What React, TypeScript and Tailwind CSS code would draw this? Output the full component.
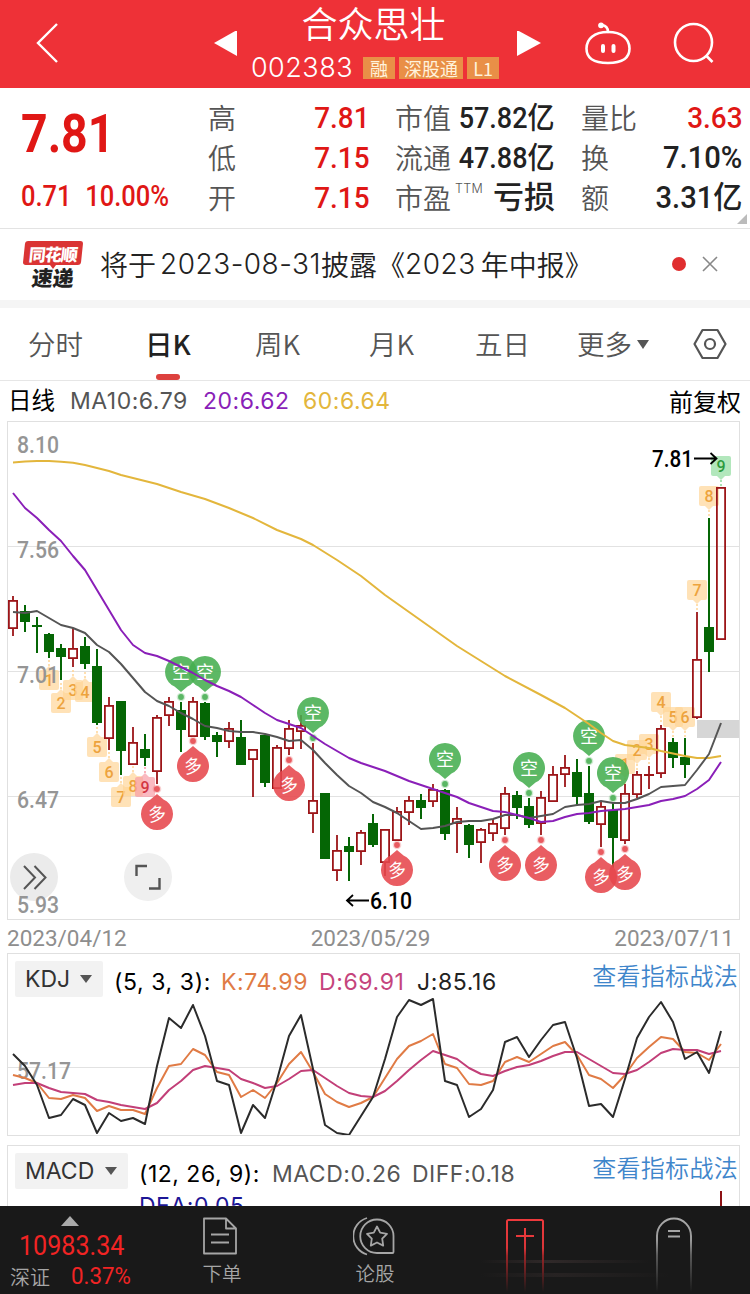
import type { ReactNode } from 'react'

type Candle = [kind: 'u' | 'd', high: number, top: number, bottom: number, low: number]

const candles: Candle[] = [
  ['u', 596, 600, 629, 636],
  ['d', 605, 611, 622, 632],
  ['d', 617, 625, 627, 653],
  ['d', 633, 634, 652, 658],
  ['d', 644, 648, 657, 680],
  ['u', 628, 648, 659, 667],
  ['d', 637, 646, 664, 669],
  ['d', 649, 666, 723, 725],
  ['u', 697, 705, 739, 750],
  ['d', 701, 701, 751, 775],
  ['u', 727, 742, 765, 765],
  ['d', 734, 749, 758, 766],
  ['u', 715, 717, 772, 784],
  ['u', 697, 701, 716, 726],
  ['d', 702, 710, 730, 752],
  ['u', 697, 701, 737, 737],
  ['d', 702, 703, 737, 740],
  ['d', 732, 735, 742, 757],
  ['u', 722, 728, 742, 748],
  ['d', 720, 737, 765, 765],
  ['u', 749, 749, 760, 797],
  ['d', 735, 735, 783, 787],
  ['u', 745, 747, 789, 789],
  ['u', 720, 728, 749, 755],
  ['u', 715, 725, 732, 749],
  ['u', 743, 800, 814, 833],
  ['d', 793, 793, 859, 859],
  ['u', 835, 850, 871, 881],
  ['d', 837, 846, 852, 881],
  ['u', 830, 832, 852, 865],
  ['d', 814, 823, 845, 847],
  ['u', 829, 829, 863, 876],
  ['u', 807, 811, 841, 841],
  ['u', 796, 800, 813, 825],
  ['d', 794, 800, 808, 819],
  ['u', 784, 789, 802, 807],
  ['d', 789, 790, 834, 840],
  ['u', 807, 818, 824, 853],
  ['d', 824, 825, 845, 858],
  ['u', 828, 829, 843, 863],
  ['u', 819, 823, 834, 841],
  ['u', 787, 793, 829, 835],
  ['d', 791, 795, 808, 819],
  ['d', 798, 806, 825, 828],
  ['u', 791, 797, 824, 835],
  ['u', 766, 774, 802, 802],
  ['u', 755, 767, 775, 787],
  ['d', 759, 772, 797, 806],
  ['d', 766, 793, 822, 824],
  ['u', 802, 806, 825, 847],
  ['d', 803, 810, 838, 868],
  ['u', 784, 793, 841, 844],
  ['u', 771, 774, 795, 798],
  ['u', 766, 774, 776, 789],
  ['u', 725, 728, 774, 778],
  ['d', 738, 742, 758, 768],
  ['d', 738, 757, 765, 778],
  ['u', 612, 659, 718, 719],
  ['d', 518, 627, 652, 672],
  ['u', 487, 487, 640, 640],
]

const ma10 = [
  612, 613, 611, 618, 625, 628, 633, 645, 652, 664, 678, 692, 701, 706, 713, 719, 726, 728, 731, 732, 732, 734, 737, 741,
  740, 750, 763, 775, 786, 793, 802, 807, 813, 821, 829, 828, 826, 822, 821, 821, 819, 815, 815, 818, 816, 814, 807, 805,
  804, 801, 803, 803, 799, 794, 787, 786, 785, 770, 754, 723,
]

const ma20 = [
  493, 508, 518, 530, 541, 556, 570, 590, 610, 630, 645, 653, 656, 661, 667, 673, 680, 686, 691, 697, 705, 713, 720, 724,
  728, 736, 744, 751, 758, 763, 767, 771, 776, 781, 785, 789, 793, 797, 803, 807, 811, 812, 815, 818, 822, 821, 817, 814,
  813, 811, 810, 809, 807, 805, 801, 799, 796, 789, 780, 762,
]

const ma60 =
  '13,462.5 25,461.5 37,461 49,461 61,461.7 73,462.7 85,465 97,468 109,471 121,475 133,478 157,484 181,492 205,499 229,508 253,518 277,530 301,539 313,545 337,560 361,576 385,595 409,612 433,629 457,646 481,661 505,676 541,695 565,708 589,724 601,733 613,741 625,745 649,748 661,751 685,756 697,758 709,758 721,756'

const kdjJ = [
  1054, 1066, 1085, 1118, 1115, 1099, 1105, 1133, 1113, 1121, 1118, 1124, 1066, 1018, 1028, 1005, 1036, 1081, 1085, 1133,
  1105, 1118, 1080, 1036, 1015, 1069, 1125, 1133, 1135, 1116, 1097, 1059, 1017, 1000, 1005, 999, 1081, 1085, 1117, 1109,
  1090, 1042, 1037, 1057, 1040, 1025, 1022, 1058, 1106, 1104, 1117, 1079, 1038, 1017, 1002, 1022, 1059, 1052, 1073, 1031,
]

const kdjK = [
  1075, 1078, 1083, 1098, 1099, 1095, 1098, 1111, 1106, 1110, 1110, 1114, 1088, 1066, 1064, 1049, 1055, 1072, 1075, 1097,
  1090, 1098, 1083, 1064, 1052, 1072, 1094, 1102, 1107, 1103, 1097, 1078, 1059, 1046, 1041, 1034, 1064, 1068, 1084, 1085,
  1081, 1062, 1057, 1062, 1054, 1046, 1042, 1055, 1075, 1079, 1088, 1075, 1058, 1047, 1037, 1039, 1052, 1053, 1060, 1044,
]

const kdjD = [
  1085, 1083, 1083, 1088, 1092, 1093, 1094, 1100, 1102, 1105, 1107, 1109, 1103, 1090, 1081, 1070, 1066, 1068, 1070, 1079,
  1083, 1088, 1086, 1079, 1071, 1070, 1078, 1086, 1093, 1096, 1097, 1091, 1081, 1070, 1060, 1051, 1055, 1059, 1068, 1074,
  1076, 1071, 1067, 1065, 1061, 1056, 1052, 1052, 1059, 1066, 1073, 1074, 1070, 1062, 1053, 1049, 1050, 1050, 1054, 1051,
]

const shortPins = [[181, 672], [205, 672], [313, 713], [445, 759], [529, 768], [589, 736], [613, 773]]
const longPins = [[193, 766], [157, 814], [289, 785], [397, 870], [505, 865], [541, 865], [601, 877], [625, 874]]

// x, y of the box centre, digit
const tagsBelow: [number, number, number][] = [
  [49, 680, 1], [61, 703, 2], [73, 690, 3], [85, 692, 4], [97, 747, 5], [109, 772, 6], [121, 797, 7], [133, 786, 8], [145, 787, 9],
]
const tagsAbove: [number, number, number][] = [
  [625, 764, 1], [637, 750, 2], [649, 744, 3], [661, 702, 4], [673, 717, 5], [685, 717, 6], [697, 590, 7], [709, 496, 8], [721, 466, 9],
]

const toPoints = (ys: number[]) => ys.map((y, i) => `${13 + i * 12},${y}`).join(' ')

const RED = 'text-[30px] scale-x-[0.93] text-[#e01715]'
const MID = 'text-[30px] scale-x-[0.9] text-[#222]'
const WIDE = 'text-[31px] scale-x-[0.94] text-[#222]'

const quotes = [
  { label: '高', value: '7.81', style: RED },
  { label: '市值', value: '57.82亿', style: MID },
  { label: '量比', value: '3.63', style: RED },
  { label: '低', value: '7.15', style: RED },
  { label: '流通', value: '47.88亿', style: MID },
  { label: '换', value: '7.10%', style: WIDE },
  { label: '开', value: '7.15', style: RED },
  { label: '市盈', value: '亏损', style: 'text-[31px] text-[#222]', ttm: true },
  { label: '额', value: '3.31亿', style: WIDE },
]

function Header() {
  return (
    <header className="flex h-[88px] items-center bg-[#ee3137] text-white">
      <svg className="ml-[34px] h-[44px] w-[28px]" viewBox="0 0 28 44" fill="none" stroke="currentColor" strokeWidth="2.4">
        <path d="M23 2L4 21L23 40" />
      </svg>
      <svg className="ml-[152px] h-[26px] w-[24px]" viewBox="0 0 24 26" fill="currentColor">
        <path d="M0 12L23 -1V25Z" />
      </svg>
      <div className="ml-[12px] flex w-[250px] flex-col items-center">
        <h1 className="-ml-[3px] text-[36px] leading-[38px] font-[350]">合众思壮</h1>
        <div className="mt-[9px] flex h-[36px] items-center gap-1">
          <span className="mr-[6px] font-[Inter] text-[27px] leading-[36px] font-light tracking-[0.5px]">002383</span>
          <Badge className="w-8">融</Badge>
          <Badge className="w-16">深股通</Badge>
          <Badge className="w-8">L1</Badge>
        </div>
      </div>
      <svg className="ml-[17px] h-[26px] w-[24px]" viewBox="0 0 24 26" fill="currentColor">
        <path d="M0 -1L24 12L0 25Z" />
      </svg>
      <svg className="ml-[43px] h-[44px] w-[48px]" viewBox="0 0 48 44" fill="none" stroke="currentColor" strokeWidth="2.6" strokeLinecap="round">
        <path d="M24 10C38 10 45.500 17 45.500 26.500C45.500 36 39 41 24 41C9 41 2.500 36 2.500 26.500C2.500 17 10 10 24 10Z" />
        <path d="M24 10C24 6 22 3.500 17.500 3" />
        <circle cx="17" cy="3.300" r="1.600" fill="currentColor" />
        <path d="M19 24V29M29.500 24V29" strokeWidth="4" />
      </svg>
      <svg className="ml-[40px] h-[44px] w-[44px]" viewBox="0 0 44 44" fill="none" stroke="currentColor" strokeWidth="2.600">
        <circle cx="21.500" cy="20.500" r="18.500" />
        <path d="M34 33.500L40.500 40" />
      </svg>
    </header>
  )
}

function Badge({ children, className }: { children: ReactNode; className: string }) {
  return (
    <span className={`${className} flex h-[22px] items-center justify-center bg-[#e98f47] text-[18px] leading-[22px] text-[#fff3dc]`}>
      {children}
    </span>
  )
}

function Quote() {
  return (
    <section className="relative flex h-[141px] border-b border-[#e3e3e3] pt-[9px]">
      <div className="ml-[21px] w-[187px] font-[Roboto] text-[#e01715]">
        <div className="mt-[7px] h-[60px] origin-left scale-x-[0.86] text-[54px] leading-[60px] font-bold">7.81</div>
        <div className="mt-[15px] flex h-[34px] origin-left scale-x-[0.88] text-[29px] leading-[34px] font-medium whitespace-nowrap">
          <span className="w-[73px]">0.71</span>
          <span>10.00%</span>
        </div>
      </div>
      <div className="grid h-[120px] grid-cols-[161px_160px_161px] grid-rows-3 gap-x-[26px]">
        {quotes.map((q) => (
          <div key={q.label} className="flex items-center justify-between whitespace-nowrap">
            <span className="-mt-px flex text-[28px] font-[350] text-[#555]">
              {q.label}
              {q.ttm && <sup className="top-0 mt-[7px] ml-[4px] font-[Inter] text-[12.500px] leading-none tracking-[0.3px]">TTM</sup>}
            </span>
            <span className={`${q.style} mt-[2px] -ml-6 origin-right font-[Roboto,'Noto_Sans_CJK_SC',sans-serif] leading-[38px] font-medium`}>
              {q.value}
            </span>
          </div>
        ))}
      </div>
      <svg className="absolute right-[3px] bottom-[4px] h-[10px] w-[10px]" viewBox="0 0 10 10">
        <path d="M10 0V10H0Z" fill="#bbb" />
      </svg>
    </section>
  )
}

function Notice() {
  return (
    <section className="flex h-[71px] items-center pb-px">
      <div className="relative ml-[23px] flex w-[60px] flex-col items-center">
        <div className="flex h-[24px] w-[58px] -skew-x-6 items-center justify-center rounded-[3px] bg-[#da3434] text-[17px] leading-none font-black tracking-[-1px] text-white">
          同花顺
        </div>
        <div className="h-0 w-0 border-x-[3px] border-t-[4px] border-x-transparent border-t-[#da3434]" />
        <div className="-mt-[2px] h-[21px] -skew-x-6 text-[21px] leading-[21px] font-black text-[#222]">速递</div>
      </div>
      <p className="-mt-px ml-[17px] flex w-[579px] items-center text-[28px] font-[350] whitespace-nowrap text-[#222]">
        将于<span className="ml-[4px] font-[Inter] text-[28px] tracking-[0.5px]">2023-08-31</span>披露《
        <span className="font-[Inter] text-[28px] tracking-[0.5px]">2023</span>
        <span className="ml-[5px]">年中报》</span>
      </p>
      <span className="-ml-[7px] h-[14px] w-[14px] rounded-full bg-[#e02e2f]" />
      <svg className="ml-[16px] h-[16px] w-[16px]" viewBox="0 0 16 16" stroke="#888" strokeWidth="1.6">
        <path d="M1 1L15 15M15 1L1 15" />
      </svg>
    </section>
  )
}

function Tabs() {
  return (
    <nav className="grid h-[73px] grid-cols-[118px_109px_114px_106px_102px_116px_1fr] items-center border-b border-[#e6e6e6] pl-[28px] text-[27.500px] font-[350] whitespace-nowrap text-[#555]">
      <span>分时</span>
      <span className="relative -ml-px font-medium text-[#222]">
        日K
        <i className="absolute -bottom-[15px] left-[11px] h-[6px] w-[24px] rounded-full bg-[#dd413e]" />
      </span>
      <span>周K</span>
      <span>月K</span>
      <span>五日</span>
      <span className="flex items-center gap-[5px]">
        更多
        <svg className="h-[9px] w-[12px]" viewBox="0 0 12 9">
          <path d="M0 0H12L6 9Z" fill="#555" />
        </svg>
      </span>
      <svg className="h-[32px] w-[34px]" viewBox="0 0 34 32" fill="none" stroke="#555" strokeWidth="2.2" strokeLinejoin="round">
        <path d="M9.500 2H24.500L32.500 16L24.500 30H9.500L1.500 16Z" />
        <circle cx="17" cy="16" r="5" />
      </svg>
    </nav>
  )
}

function Tag({ x, y, n, below }: { x: number; y: number; n: number; below?: boolean }) {
  const dir = below ? -1 : 1
  const hot = n === 9
  const bg = hot ? (below ? '#f99aa5' : '#8fdc9d') : '#ffd596'
  const ink = hot ? (below ? '#d33642' : '#2d9b3e') : '#eda33d'
  return (
    <g>
      <g fill={bg} opacity="0.68">
        <rect x={x - 10} y={y - 10} width="20" height="20" rx="2" />
        <path d={`M${x - 4} ${y + dir * 10}L${x} ${y + dir * 14}L${x + 4} ${y + dir * 10}Z`} />
      </g>
      <path d={`M${x} ${y + dir * 14}V${y + dir * 21}`} stroke={bg} strokeWidth="1.5" strokeDasharray="2 2" />
      <text x={x} y={y + 6} textAnchor="middle" fontSize="16" fontWeight="500" fill={ink}>
        {n}
      </text>
    </g>
  )
}

function Pin({ x, y, long }: { x: number; y: number; long?: boolean }) {
  const dir = long ? -1 : 1
  const fill = long ? '#e6474c' : '#45ae50'
  return (
    <g fill={fill}>
      <circle cx={x} cy={y + dir * 25} r="4.300" opacity="0.25" />
      <circle cx={x} cy={y + dir * 25} r="2.900" opacity="0.85" />
      <g opacity="0.88">
        <path
          d={
            long
              ? `M${x} ${y - 20}L${x + 6.500} ${y - 14.600}A16 16 0 1 1 ${x - 6.500} ${y - 14.600}Z`
              : `M${x} ${y + 20}L${x - 6.500} ${y + 14.600}A16 16 0 1 1 ${x + 6.500} ${y + 14.600}Z`
          }
        />
      </g>
      <text
        x={x}
        y={y + 6.500}
        textAnchor="middle"
        fontSize="18"
        fill="#fff"
        fontFamily="Noto Sans CJK SC, sans-serif"
        transform={long ? `rotate(-8 ${x} ${y})` : undefined}
      >
        {long ? '多' : '空'}
      </text>
    </g>
  )
}

function AxisLabel({ x, y, width, children }: { x: number; y: number; width: number; children: string }) {
  return (
    <text x={x} y={y} fontSize="24" fontWeight="500" fill="#959595" textLength={width} lengthAdjust="spacingAndGlyphs">
      {children}
    </text>
  )
}

function KLine() {
  return (
    <div className="relative ml-[7px] h-[499px] w-[733px] border border-[#e0e0e0]">
      <svg className="block h-[497px] w-[731px]" viewBox="8 422 731 497" fontFamily="Roboto, sans-serif">
        <path d="M8 546.500H739M8 671.500H739M8 796.500H739" stroke="#e2e2e2" />
        <rect x="697" y="720" width="42" height="18" fill="#d6d6d6" />
        {tagsBelow.map(([x, y, n]) => (
          <Tag key={x} x={x} y={y} n={n} below />
        ))}
        {tagsAbove.map(([x, y, n]) => (
          <Tag key={x} x={x} y={y} n={n} />
        ))}
        <circle cx="34" cy="877" r="24" fill="#ebebeb" />
        <AxisLabel x={17} y={453} width={42}>8.10</AxisLabel>
        <AxisLabel x={17} y={558} width={42}>7.56</AxisLabel>
        <AxisLabel x={17} y={683} width={42}>7.01</AxisLabel>
        <AxisLabel x={17} y={808} width={42}>6.47</AxisLabel>
        <AxisLabel x={17} y={913} width={42}>5.93</AxisLabel>
        {candles.map(([kind, high, top, bottom, low], i) => {
          const x = 13 + i * 12
          if (kind === 'd') {
            return (
              <g key={x} fill="#056605">
                <rect x={x - 1} y={high} width="2" height={low - high} />
                <rect x={x - 5} y={top} width="10" height={bottom - top} />
              </g>
            )
          }
          return (
            <g key={x} stroke="#9c1518" strokeWidth="1.8" fill="none">
              <path d={`M${x} ${high}V${top}M${x} ${bottom}V${low}`} />
              <rect x={x - 4.100} y={top + 0.9} width="8.200" height={Math.max(bottom - top - 1.8, 0.2)} />
            </g>
          )
        })}
        {shortPins.map(([x, y]) => (
          <Pin key={x} x={x} y={y} />
        ))}
        {longPins.map(([x, y]) => (
          <Pin key={x} x={x} y={y} long />
        ))}
        <g fill="none" strokeWidth="2" strokeLinejoin="round">
          <polyline points={ma60} stroke="#e3b63c" />
          <polyline points={toPoints(ma10)} stroke="#555" />
          <polyline points={toPoints(ma20)} stroke="#8a1fb8" />
        </g>
        <g fill="#000" fontSize="24" fontWeight="500">
          <text x="652" y="467" textLength="41" lengthAdjust="spacingAndGlyphs">7.81</text>
          <text x="370" y="909" textLength="42" lengthAdjust="spacingAndGlyphs">6.10</text>
        </g>
        <path d="M694 458.500H716M710.500 453L716.500 458.500L710.500 464M369 900.500H347.500M353 895L347 900.500L353 906" fill="none" stroke="#000" strokeWidth="1.8" />
        <circle cx="148" cy="877" r="24" fill="#efefef" />
        <path d="M24 866L35 877.500L24 889M34.500 866L45.500 877.500L34.500 889" fill="none" stroke="#555" strokeWidth="2" />
        <path d="M136.500 876V866H147M149 888.500H159.500V878" fill="none" stroke="#555" strokeWidth="2.400" />
      </svg>
    </div>
  )
}

function IndicatorButton({ children, className }: { children: string; className: string }) {
  return (
    <button className={`${className} flex h-[36px] items-center justify-between rounded-[2px] bg-[#f2f2f2] pr-[11px] pl-[10px] font-[Inter] text-[23px] tracking-normal text-[#333]`}>
      {children}
      <svg className="h-[8px] w-[12px]" viewBox="0 0 12 8">
        <path d="M0 0H12L6 8Z" fill="#555" />
      </svg>
    </button>
  )
}

function GuideLink() {
  return (
    <a className="mt-[4px] mr-[1px] ml-auto font-['Noto_Sans_CJK_SC',sans-serif] text-[24px] font-[350] tracking-[0.300px] text-[#3f86cb]">
      查看指标战法
    </a>
  )
}

function Kdj() {
  return (
    <div className="relative ml-[7px] h-[183px] w-[733px] border border-[#e0e0e0]">
      <svg className="absolute inset-0 h-[181px] w-[731px]" viewBox="8 954 731 181" fontFamily="Roboto, sans-serif">
        <path d="M8 1067.500H739" stroke="#e2e2e2" />
        <AxisLabel x={17} y={1079} width={54}>57.17</AxisLabel>
        <g fill="none" strokeWidth="2" strokeLinejoin="round">
          <polyline points={toPoints(kdjK)} stroke="#e07b45" />
          <polyline points={toPoints(kdjD)} stroke="#c23f78" />
          <polyline points={toPoints(kdjJ)} stroke="#2b2b2b" />
        </g>
      </svg>
      <div className="relative flex items-start pl-[7px] font-[Inter] text-[23px] leading-[34px] tracking-[0.6px] whitespace-nowrap">
        <IndicatorButton className="mt-[7px] w-[88px]">KDJ</IndicatorButton>
        <span className="mt-[11px] ml-[11px] w-[107px] text-black">(5, 3, 3):</span>
        <span className="mt-[11px] w-[98px] text-[#e07b45]">K:74.99</span>
        <span className="mt-[11px] w-[98px] text-[#c5447c]">D:69.91</span>
        <span className="mt-[11px] text-[#222]">J:85.16</span>
        <GuideLink />
      </div>
    </div>
  )
}

function Macd() {
  return (
    <div className="relative mt-[9px] ml-[7px] h-[61px] w-[733px] overflow-hidden border border-b-0 border-[#e0e0e0]">
      <div className="flex items-start pl-[7px] font-[Inter] text-[23px] leading-[34px] tracking-[0.500px] whitespace-nowrap">
        <IndicatorButton className="mt-[7px] w-[113px]">MACD</IndicatorButton>
        <div className="mt-[11px] ml-[11px] w-[440px]">
          <div className="flex">
            <span className="w-[133px] text-black">(12, 26, 9):</span>
            <span className="w-[140px] text-[#555]">MACD:0.26</span>
            <span className="text-[#555]">DIFF:0.18</span>
          </div>
          <div className="-mt-[2px] text-[#1c1696]">DEA:0.05</div>
        </div>
        <GuideLink />
      </div>
      <span className="absolute right-[17px] bottom-0 h-[15px] w-[2px] bg-[#8d1114]" />
    </div>
  )
}

function BottomBar() {
  return (
    <footer className="flex h-[88px] bg-[#191919] text-[#a6a6a6]">
      <div className="w-[144px]">
        <svg className="mt-[10px] ml-[61px] block h-[10px] w-[18px]" viewBox="0 0 18 10">
          <path d="M9 0L18 10H0Z" fill="#aaa" />
        </svg>
        <div className="mt-[4px] ml-[19px] h-[32px] origin-left scale-x-[0.93] font-[Roboto] text-[27px] leading-[32px] text-[#f12424]">10983.34</div>
        <div className="flex h-[30px] items-center pl-[10px] whitespace-nowrap">
          <span className="w-[61px] text-[20px] font-[350]">深证</span>
          <span className="origin-left scale-x-[0.97] font-[Roboto] text-[23px] text-[#f12424]">0.37%</span>
        </div>
      </div>
      <div className="flex w-[156px] flex-col items-center">
        <svg className="mt-[11px] mr-[4px] h-[38px] w-[36px]" viewBox="0 0 36 38" fill="none" stroke="currentColor" strokeWidth="1.8">
          <path d="M2 1.500H24L34 11.500V36.500H2ZM24 1.500V11.500H34M9 17.500H27M9 25.500H27" strokeLinejoin="round" />
        </svg>
        <span className="mt-[4px] text-[19.500px] leading-[28px] font-[350]">下单</span>
      </div>
      <div className="flex w-[150px] flex-col items-center">
        <svg className="mt-[10px] mr-[3px] h-[40px] w-[42px]" viewBox="0 0 42 40" fill="none" stroke="currentColor" strokeWidth="1.8" strokeLinejoin="round">
          <path d="M24 3.500A16.500 16.500 0 1 0 24 37H39.500Q40.500 37 40.500 36V20A16.500 16.500 0 0 0 24 3.500Z" />
          <path d="M14 2A19 19 0 0 0 14 38.500" />
          <path d="M24 10.500L27.200 16.700L34 17.800L29.200 22.700L30.200 29.600L24 26.500L17.800 29.600L18.800 22.700L14 17.800L20.800 16.700Z" />
        </svg>
        <span className="mt-[3px] text-[19.500px] leading-[28px] font-[350]">论股</span>
      </div>
      <svg className="h-[88px] w-[300px]" viewBox="450 1206 300 88" fill="none">
        <defs>
          <linearGradient id="redFade" gradientUnits="userSpaceOnUse" x1="0" y1="1219" x2="0" y2="1292">
            <stop offset="0" stopColor="#ee3a3d" />
            <stop offset="0.4" stopColor="#d93538" />
            <stop offset="0.5" stopColor="#9c2527" />
            <stop offset="1" stopColor="#191919" />
          </linearGradient>
          <linearGradient id="greyFade" gradientUnits="userSpaceOnUse" x1="0" y1="1218" x2="0" y2="1292">
            <stop offset="0" stopColor="#aaa" />
            <stop offset="0.3" stopColor="#999" />
            <stop offset="0.5" stopColor="#5a5a5a" />
            <stop offset="1" stopColor="#191919" />
          </linearGradient>
          <linearGradient id="glow" x1="0" x2="1">
            <stop offset="0" stopColor="#191919" />
            <stop offset="0.4" stopColor="#302929" />
            <stop offset="1" stopColor="#191919" />
          </linearGradient>
        </defs>
        <rect x="480" y="1260" width="170" height="3" fill="url(#glow)" />
        <rect x="480" y="1273" width="190" height="4" fill="url(#glow)" opacity="0.6" />
        <path d="M507 1292V1221.500Q507 1220 508.500 1220H541.500Q543 1220 543 1221.500V1292M525 1228V1292" stroke="url(#redFade)" strokeWidth="2" />
        <path d="M516 1236H534" stroke="#e8383b" strokeWidth="2" />
        <path d="M657 1292V1236A17 17.500 0 0 1 691 1236V1292" stroke="url(#greyFade)" strokeWidth="2" />
        <path d="M668 1231H680M668 1236.500H680" stroke="#a5a5a5" strokeWidth="1.800" />
      </svg>
    </footer>
  )
}

export default function App() {
  return (
    <main className="h-[1294px] w-[750px] overflow-hidden bg-white font-['Noto_Sans_CJK_SC',sans-serif]">
      <Header />
      <Quote />
      <Notice />
      <div className="h-[8px] bg-[#f5f5f5]" />
      <Tabs />
      <div className="flex h-[40px] items-center pr-[9px] pl-[8px] font-[Inter] text-[23px] tracking-[0.5px] whitespace-nowrap">
        <span className="-mt-[2px] w-[62px] font-['Noto_Sans_CJK_SC',sans-serif] text-[23.500px] tracking-normal text-black">日线</span>
        <span className="w-[133px] text-[#555]">MA10:6.79</span>
        <span className="w-[100px] text-[#8a1fb8]">20:6.62</span>
        <span className="text-[#e3b63c]">60:6.64</span>
        <span className="-mt-px ml-auto font-['Noto_Sans_CJK_SC',sans-serif] text-[24px] tracking-normal text-black">前复权</span>
      </div>
      <KLine />
      <div className="flex h-[33px] items-center justify-between pt-[4px] pr-[16px] pl-[7px] font-[Roboto] text-[22.500px] text-[#8e8e8e]">
        <span>2023/04/12</span>
        <span>2023/05/29</span>
        <span>2023/07/11</span>
      </div>
      <Kdj />
      <Macd />
      <BottomBar />
    </main>
  )
}
